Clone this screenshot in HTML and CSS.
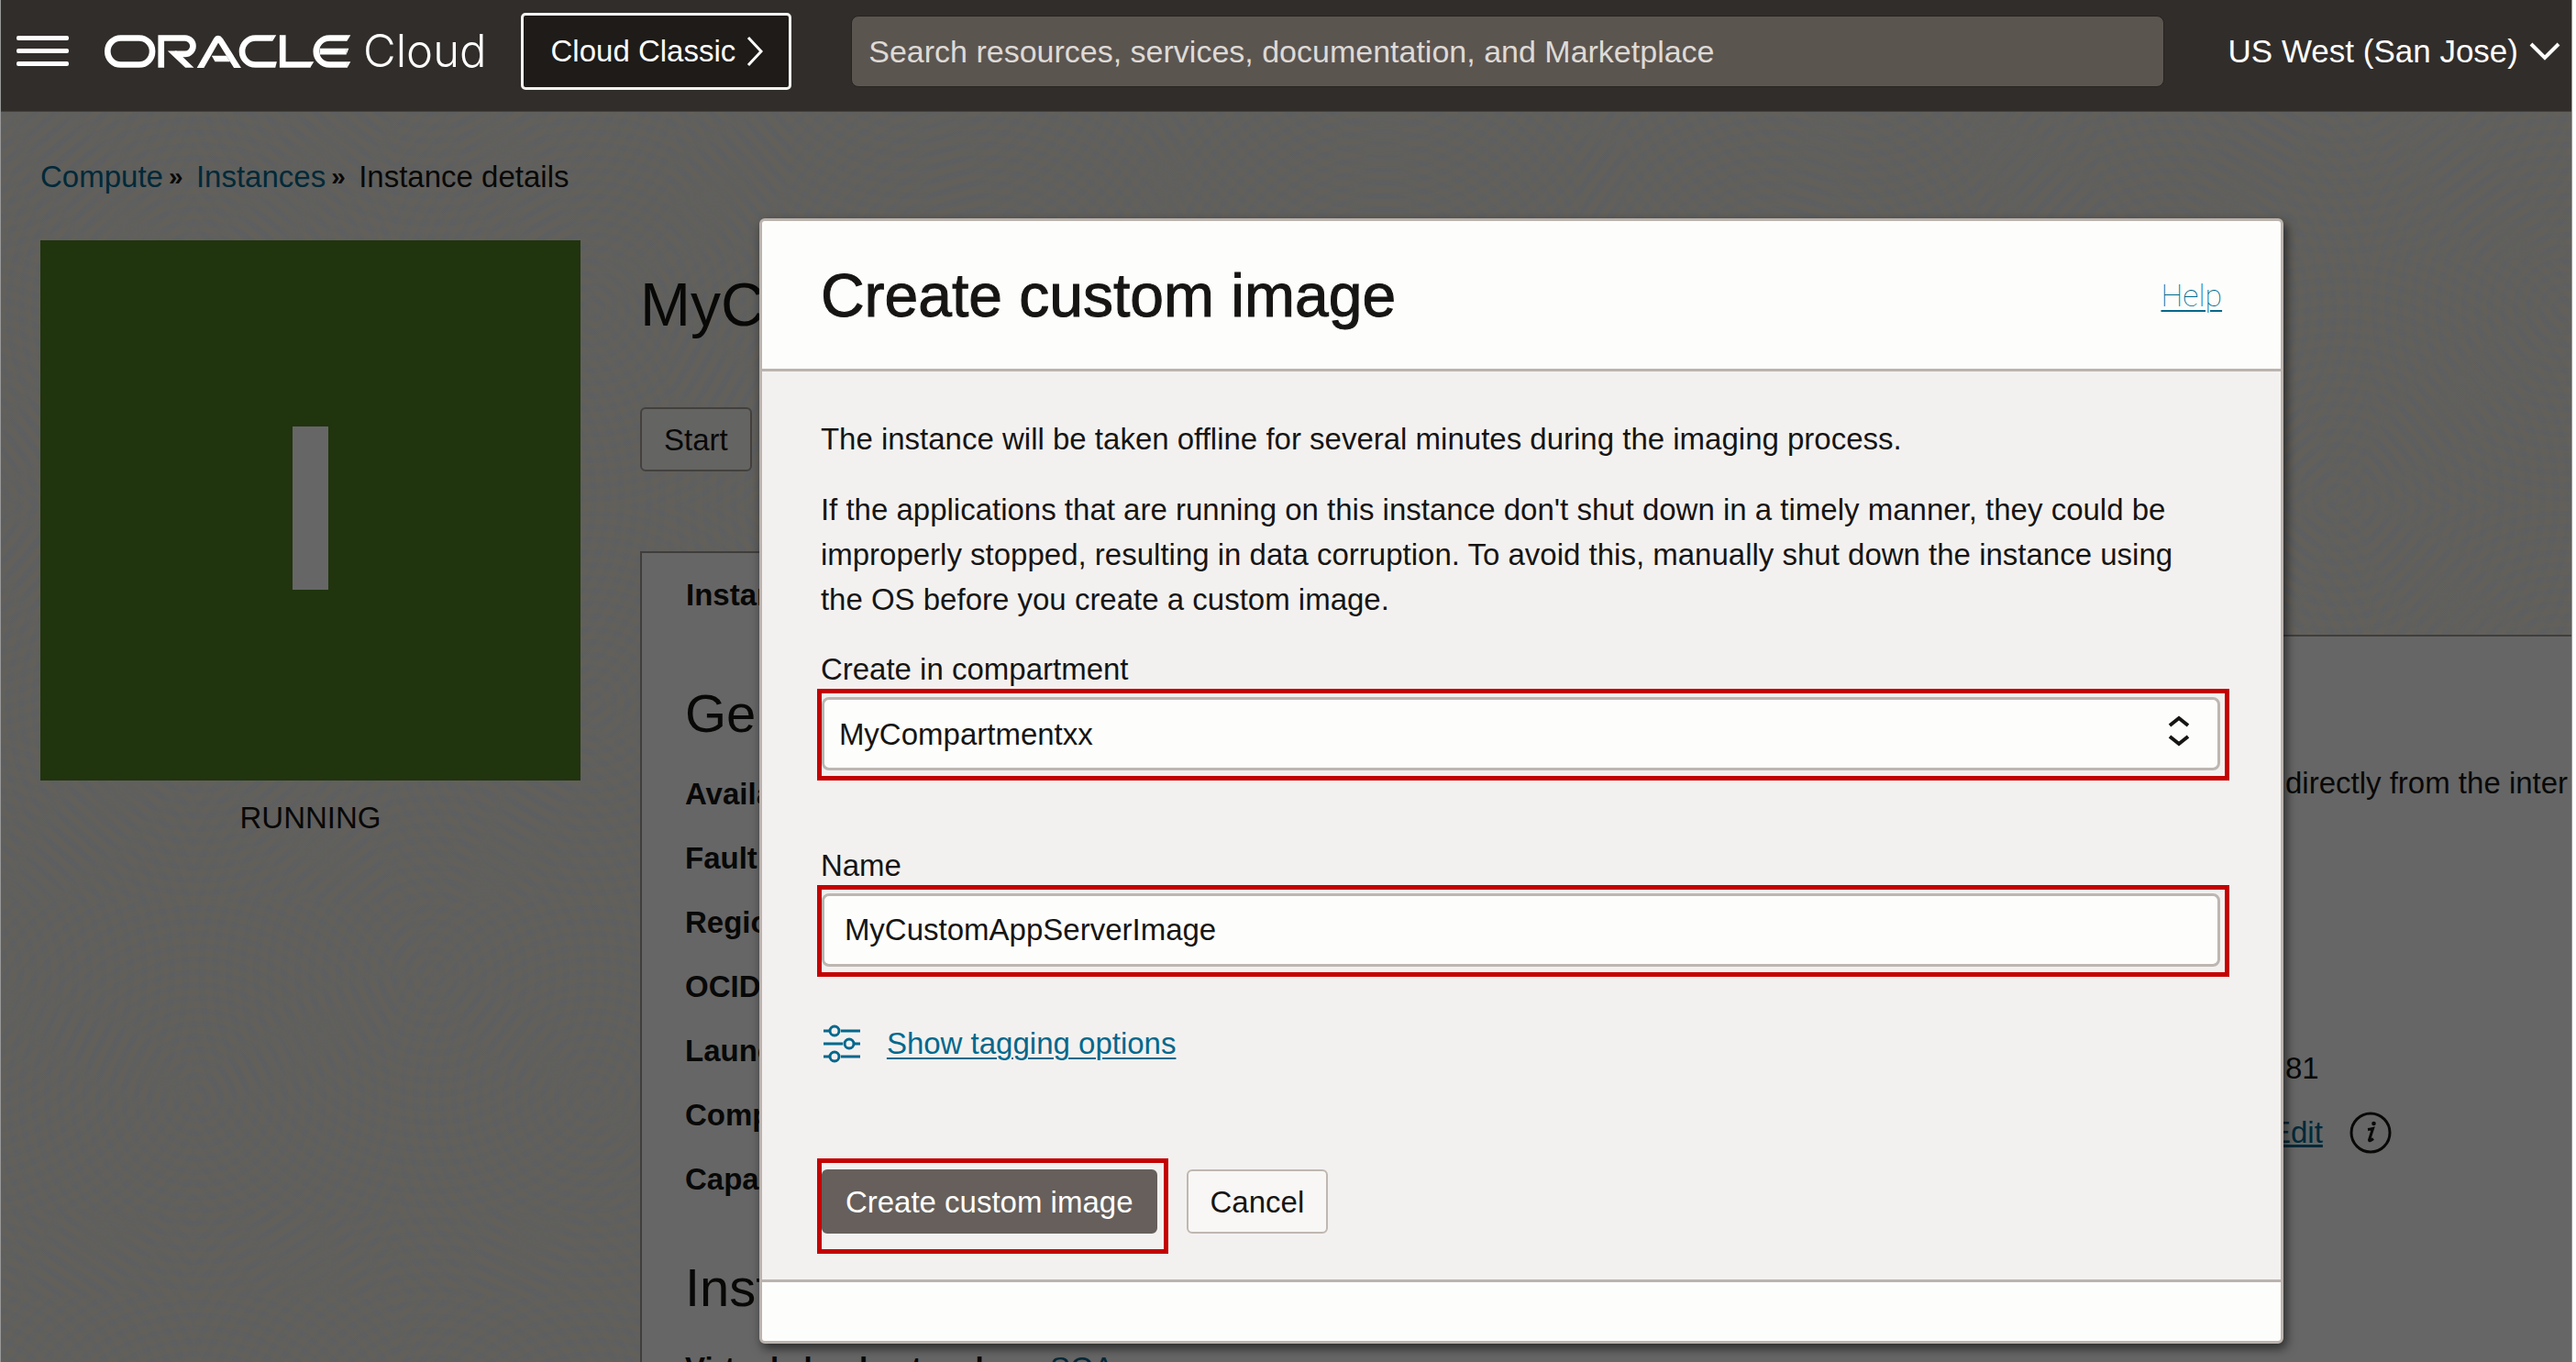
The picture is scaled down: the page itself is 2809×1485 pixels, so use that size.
FILE: index.html
```html
<!DOCTYPE html>
<html lang="en">
<head>
<meta charset="utf-8">
<title>Instance details - Oracle Cloud</title>
<link rel="stylesheet" href="styles.css">
</head>
<body>
<div class="shell">
  <header class="topbar">
    <button class="menu" type="button" aria-label="Open navigation menu"><span class="menu-bar"></span><span class="menu-bar"></span><span class="menu-bar"></span></button>
    <a class="brand" href="#">
      <svg class="brand-logo" viewBox="42 43 806 107" role="img" aria-label="Oracle">
        <g fill="none" stroke="#fff" stroke-width="20">
          <rect x="52" y="53" width="146" height="87" rx="43"/>
          <path d="M227 150V53H305a26 26 0 0 1 0 52H272"/>
          <path d="M352 156L407 60Q413 50 420 60L480 156"/>
          <path d="M590 53H535a43 43 0 0 0 0 87H600"/>
          <path d="M624 43V140H714"/>
          <path d="M833 53H777a43 43 0 0 0 0 87H835M745 97H832"/>
        </g>
        <path fill="#fff" d="M248 95H277L334 150H306ZM392 111H440L452 130H403ZM589 43H603L591 63H589ZM599 130H605L600 150ZM713 130H726L714 150H713ZM832 43H846L834 63H832ZM831 87H840L832 107ZM834 130H846L835 150H834Z"/>
      </svg>
      <span class="brand-name">Cloud</span>
    </a>
    <button class="classic" type="button">Cloud Classic
      <svg class="icon-right" viewBox="0 0 18 34"><path d="M2 2L16 17L2 32"/></svg>
    </button>
    <input class="search" type="search" aria-label="Search" placeholder="Search resources, services, documentation, and Marketplace">
    <button class="region" type="button">US West (San Jose)
      <svg class="icon-down" viewBox="0 0 34 20"><path d="M2 2L17 17L32 2"/></svg>
    </button>
  </header>

  <div class="page">
    <nav class="crumbs" aria-label="Breadcrumb"><a href="#">Compute</a><span class="crumb-sep">»</span><a href="#">Instances</a><span class="crumb-sep">»</span><span>Instance details</span></nav>
    <div class="columns">
      <aside class="status">
        <div class="status-tile"><span class="status-mark"></span></div>
        <p class="status-text">RUNNING</p>
      </aside>
      <main class="instance">
        <h1 class="instance-name">MyCustomAppServer</h1>
        <div class="actions"><button class="btn btn-plain" type="button">Start</button></div>
        <div class="tab">Instance information</div>
        <div class="panel">
          <div class="panel-left">
            <h2 class="section-title">General information</h2>
            <p class="row"><b>Availability domain:</b></p>
            <p class="row"><b>Fault domain:</b></p>
            <p class="row"><b>Region:</b></p>
            <p class="row"><b>OCID:</b></p>
            <p class="row"><b>Launched:</b></p>
            <p class="row"><b>Compartment:</b></p>
            <p class="row"><b>Capacity type:</b></p>
            <h2 class="section-title section-next">Instance details</h2>
            <p class="row row-pair"><b>Virtual cloud network:</b><a href="#">SOA</a></p>
          </div>
          <div class="panel-right">
            <p class="access-note">directly from the inter</p>
            <p class="address">81</p>
            <p class="edit-row"><a class="edit" href="#">Edit</a>
              <svg class="icon-info" viewBox="0 0 46 46" role="img" aria-label="Information"><circle cx="23" cy="23" r="21"/><path d="M20 19.500Q24 19 25.500 18.500L21.500 31Q21.500 33 26 29.500" /><circle class="dot" cx="26.500" cy="13" r="2.300"/></svg>
            </p>
          </div>
        </div>
      </main>
    </div>

    <div class="overlay">
      <form class="dialog" role="dialog" aria-labelledby="dialog-title">
        <div class="dialog-head">
          <h2 class="dialog-title" id="dialog-title">Create custom image</h2>
          <a class="help" href="#">Help</a>
        </div>
        <div class="dialog-body">
          <div class="notes">
            <p>The instance will be taken offline for several minutes during the imaging process.</p>
            <p>If the applications that are running on this instance don't shut down in a timely manner, they could be improperly stopped, resulting in data corruption. To avoid this, manually shut down the instance using the OS before you create a custom image.</p>
          </div>
          <label class="label" for="compartment">Create in compartment</label>
          <div class="marked marked-select">
            <select class="field select" id="compartment"><option>MyCompartmentxx</option></select>
            <svg class="icon-updown" viewBox="0 0 24 34"><path d="M2 11L12 3L22 11M2 23L12 31L22 23"/></svg>
          </div>
          <label class="label label-name" for="name">Name</label>
          <div class="marked"><input class="field" id="name" type="text" value="MyCustomAppServerImage"></div>
          <div class="tagging">
            <svg class="icon-sliders" viewBox="0 0 42 42"><path d="M1 7H8M20 7H41M1 21H22M34 21H41M1 35H8M20 35H41"/><circle cx="13" cy="7" r="5"/><circle cx="29" cy="21" r="5"/><circle cx="13" cy="35" r="5"/></svg>
            <a href="#">Show tagging options</a>
          </div>
          <div class="buttons">
            <div class="marked marked-button"><button class="btn btn-primary" type="submit">Create custom image</button></div>
            <button class="btn btn-cancel" type="button">Cancel</button>
          </div>
        </div>
        <div class="dialog-foot"></div>
      </form>
    </div>
  </div>
</div>
</body>
</html>
```
FILE: styles.css
```css
* { box-sizing: border-box; }
body {
  margin: 0;
  padding-right: 4px;
  background: #fff;
  color: #161513;
  font: 33px/49px "Liberation Sans", Arial, sans-serif;
}
h1, h2, p { margin: 0; font-weight: 400; }
a { color: #00688c; }
button, input, select { font: inherit; color: inherit; margin: 0; }
svg { display: block; fill: none; stroke: currentColor; flex: none; }

.shell {
  display: flex;
  flex-direction: column;
  height: 100vh;
  overflow: hidden;
  border: solid #989898;
  border-width: 0 1px;
}

/* top bar */
.topbar {
  display: flex;
  align-items: center;
  flex: none;
  height: 122px;
  padding: 0 12px 10px 17px;
  background: #312d2a;
  border-bottom: 1px solid #46403c;
  color: #fff;
}
.menu {
  display: flex;
  flex-direction: column;
  gap: 9px;
  width: 57px;
  padding: 0;
  border: 0;
  background: none;
}
.menu-bar { height: 5px; border-radius: 2px; background: #fff; }
.brand {
  display: flex;
  align-items: center;
  gap: 13px;
  margin-left: 39px;
  color: #fff;
  text-decoration: none;
}
.brand-logo { width: 269px; height: 36px; stroke: none; }
.brand-name { font: 300 49px/50px "Inter", sans-serif; }
.classic {
  display: flex;
  align-items: center;
  gap: 12px;
  height: 84px;
  margin-left: 37px;
  padding: 0 28px 0 30px;
  border: 3px solid #f5f3f0;
  border-radius: 5px;
  background: #1e1b18;
}
.icon-right { width: 18px; height: 34px; stroke-width: 3; }
.search {
  flex: 1;
  height: 78px;
  margin: 0 70px 0 65px;
  padding: 2px 18px 0;
  border: 1px solid #272320;
  border-radius: 8px;
  background: #5b5550;
  font-size: 34px;
}
.search::placeholder { color: #dedad6; opacity: 1; }
.region {
  display: flex;
  align-items: center;
  gap: 12px;
  padding: 0;
  border: 0;
  background: none;
  font-size: 35px;
}
.icon-down { width: 34px; height: 20px; stroke-width: 4; }

/* instance page */
.page {
  position: relative;
  display: flex;
  flex-direction: column;
  flex: 1;
  min-height: 0;
  padding: 46px 0 0 43px;
  background:
    repeating-radial-gradient(circle, rgba(248, 240, 222, .5) 0 5px, rgba(232, 236, 240, .5) 9px 14px) 0 0 / 430px 430px,
    repeating-radial-gradient(circle, #f6f0e6 0 6px, #e9ecee 10px 15px) 210px 160px / 520px 520px;
}
.crumbs { display: flex; }
.crumbs a { text-decoration: none; }
.crumb-sep { width: 36px; padding-left: 6px; font-size: 28px; font-weight: 700; }
.columns {
  display: grid;
  grid-template-columns: 589px 1fr;
  gap: 65px;
  flex: 1;
  margin-top: 45px;
  min-height: 0;
}
.status-tile {
  display: flex;
  align-items: center;
  justify-content: center;
  aspect-ratio: 1;
  padding-bottom: 5px;
  background: #508223;
}
.status-mark { width: 39px; height: 178px; background: #fff; }
.status-text { margin-top: 16px; text-align: center; }
.instance { display: flex; flex-direction: column; align-items: stretch; min-width: 0; }
.instance-name { font-size: 66px; line-height: 80px; padding-top: 30px; }
.actions { margin: 72px 0 87px; }
.btn {
  height: 70px;
  padding: 0 24px;
  border: 2px solid #bfb7b1;
  border-radius: 6px;
  background: #f8f7f6;
}
.btn-plain { background: #fbf9f8; border-color: #a9a19b; }
.tab {
  position: relative;
  align-self: flex-start;
  height: 93px;
  margin-bottom: -2px;
  padding: 21px 48px;
  border: solid #a19b96;
  border-width: 2px 2px 0;
  background: #fff;
  font-weight: 700;
}
.panel {
  display: grid;
  grid-template-columns: 1728px 1fr;
  flex: 1;
  border: solid #a19b96;
  border-width: 2px 0 0 2px;
  background: #fff;
}
.panel-left { padding: 46px 0 0 47px; }
.section-title { font-size: 58px; line-height: 76px; margin-bottom: 15px; }
.section-next { margin-top: 45px; }
.row { line-height: 70px; }
.row-pair { display: flex; gap: 52px; }
.row-pair a { text-decoration: none; }
.panel-right { padding: 135px 0 0 48px; white-space: nowrap; overflow: hidden; }
.access-note, .address { padding-left: 16px; }
.address { margin-top: 262px; }
.edit-row { display: flex; align-items: center; gap: 29px; margin-top: 21px; }
.icon-info { width: 46px; height: 46px; stroke-width: 3; }
.icon-info .dot { fill: currentColor; stroke: none; }

/* dialog over the page */
.overlay {
  position: absolute;
  inset: 0;
  padding: 116px 11.2% 18px 29.500%;
  background: rgba(0, 0, 0, .6);
}
.dialog {
  display: flex;
  flex-direction: column;
  border: 3px solid #bbb3ae;
  border-radius: 6px;
  background: #fdfdfc;
  box-shadow: 3px 5px 12px rgba(0, 0, 0, .6);
}
.dialog-head {
  display: flex;
  align-items: center;
  justify-content: space-between;
  padding: 41px 64px 40px;
}
.dialog-title { font-size: 66px; line-height: 80px; -webkit-text-stroke: 1px currentColor; }
.help { font: 100 34px/49px "Roboto", sans-serif; text-underline-offset: 4px; text-decoration-thickness: 2px; }
.dialog-body {
  padding: 49px 56px 28px 60px;
  border: solid #bbb3ae;
  border-width: 3px 0;
  background: #f3f1f0;
}
.notes { display: grid; gap: 28px; margin: 0 44px 30px 4px; }
.label { display: block; margin: 0 4px; line-height: 43px; }
.marked { padding: 4px 5px 6px 0; border: 5px solid #c40000; }
.marked-select { position: relative; }
.label-name { margin-top: 71px; }
.field {
  display: block;
  width: 100%;
  height: 80px;
  padding: 0 22px;
  border: 3px solid #bdb6b1;
  border-radius: 8px;
  background: #fdfdfc;
}
.select { appearance: none; padding-left: 16px; }
.icon-updown {
  position: absolute;
  top: 24px;
  right: 38px;
  width: 24px;
  height: 34px;
  stroke-width: 4;
  pointer-events: none;
}
.tagging { display: flex; align-items: center; gap: 28px; margin: 48px 6px 101px; color: #00688c; }
.tagging a { text-underline-offset: 4px; text-decoration-thickness: 2px; }
.icon-sliders { width: 42px; height: 42px; stroke-width: 3; }
.buttons { display: flex; align-items: center; gap: 20px; }
.marked-button { padding: 7px 7px 17px 0; }
.btn-primary { background: #665f5b; border-color: #665f5b; color: #fff; }
.btn-cancel { margin-bottom: 10px; }
.dialog-foot { height: 64px; }
```
